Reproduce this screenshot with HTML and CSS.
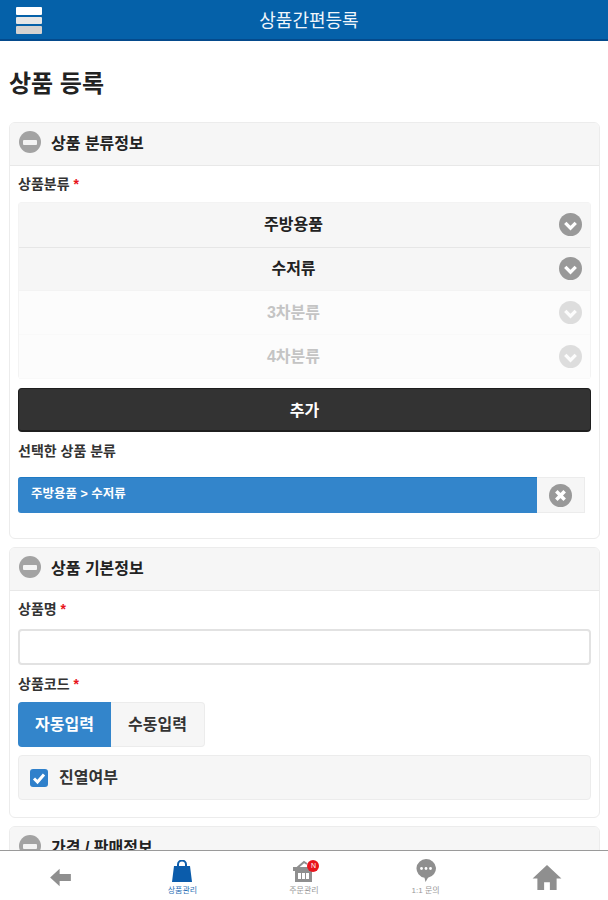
FILE: index.html
```html
<!DOCTYPE html>
<html lang="ko">
<head>
    <meta charset="UTF-8">
    <meta name="viewport" content="width=device-width, initial-scale=1.0">
    <title>상품간편등록</title>
    <link rel="stylesheet" href="styles.css">
</head>
<body>
    <header class="topbar">
        <div class="menu-btn"><span></span><span></span><span></span></div>
        <div class="topbar-title">상품간편등록</div>
    </header>

    <main class="content">
        <h1>상품 등록</h1>

        <section class="panel">
            <div class="panel-head">
                <span class="round-icon"><span class="minus"></span></span>
                <span>상품 분류정보</span>
            </div>
            <div class="panel-body">
                <div class="label">상품분류 <b>*</b></div>
                <div class="select-group">
                    <div class="select select-first">
                        <span>주방용품</span>
                        <svg class="chev" viewBox="0 0 22 22"><circle cx="11" cy="11" r="11" fill="#999"/><path d="M6 9.5l5 5 5-5" fill="none" stroke="#fff" stroke-width="3.2"/></svg>
                    </div>
                    <div class="select select-second">
                        <span>수저류</span>
                        <svg class="chev" viewBox="0 0 22 22"><circle cx="11" cy="11" r="11" fill="#999"/><path d="M6 9.5l5 5 5-5" fill="none" stroke="#fff" stroke-width="3.2"/></svg>
                    </div>
                    <div class="select disabled">
                        <span>3차분류</span>
                        <svg class="chev" viewBox="0 0 22 22"><circle cx="11" cy="11" r="11" fill="#999"/><path d="M6 9.5l5 5 5-5" fill="none" stroke="#fff" stroke-width="3.2"/></svg>
                    </div>
                    <div class="select disabled">
                        <span>4차분류</span>
                        <svg class="chev" viewBox="0 0 22 22"><circle cx="11" cy="11" r="11" fill="#999"/><path d="M6 9.5l5 5 5-5" fill="none" stroke="#fff" stroke-width="3.2"/></svg>
                    </div>
                </div>
                <div class="add-btn">추가</div>
                <div class="label selected-label">선택한 상품 분류</div>
                <div class="selected-row">
                    <div class="selected-text">주방용품 &gt; 수저류</div>
                    <div class="selected-del">
                        <svg viewBox="0 0 22 22" width="23" height="23"><circle cx="11" cy="11" r="11" fill="#999"/><path d="M7 7l8 8M15 7l-8 8" fill="none" stroke="#fff" stroke-width="3.4"/></svg>
                    </div>
                </div>
            </div>
        </section>

        <section class="panel">
            <div class="panel-head">
                <span class="round-icon"><span class="minus"></span></span>
                <span>상품 기본정보</span>
            </div>
            <div class="panel-body basic-body">
                <div class="label">상품명 <b>*</b></div>
                <input class="text-input" type="text">
                <div class="label code-label">상품코드 <b>*</b></div>
                <div class="toggle">
                    <div class="toggle-item active">자동입력</div>
                    <div class="toggle-item">수동입력</div>
                </div>
                <div class="check-row">
                    <span class="check-box">
                        <svg viewBox="0 0 18 18" width="18" height="18"><path d="M4 9.5l3.5 3.5L14 5.5" fill="none" stroke="#fff" stroke-width="3"/></svg>
                    </span>
                    <span class="check-label">진열여부</span>
                </div>
            </div>
        </section>

        <section class="panel">
            <div class="panel-head">
                <span class="round-icon"><span class="minus"></span></span>
                <span>가격 / 판매정보</span>
            </div>
        </section>
    </main>

    <nav class="tabbar">
        <div class="tab">
            <svg width="21" height="19" viewBox="0 0 24 22"><path d="M0 11L11 1v6h13v8H11v6z" fill="#8f8f8f"/></svg>
        </div>
        <div class="tab active">
            <svg width="22" height="22" viewBox="0 0 22 22"><path d="M7 8V4.5a4 4 0 0 1 8 0V8" fill="none" stroke="#0b5cab" stroke-width="2"/><path d="M3 6h16l2 16H1z" fill="#0b5cab"/></svg>
            <span>상품관리</span>
        </div>
        <div class="tab">
            <span class="tab-icon">
                <svg width="21" height="22" viewBox="0 0 21 22"><path d="M4 8l7-6 3 2" fill="none" stroke="#8f8f8f" stroke-width="2"/><path d="M0 7h21v4H0z" fill="#8f8f8f"/><path d="M2 11h17v11H2z" fill="#8f8f8f"/><path d="M5 13h3v6H5zM9 13h3v6H9zM13 13h3v6h-3z" fill="#fff"/></svg>
                <i class="badge">N</i>
            </span>
            <span>주문관리</span>
        </div>
        <div class="tab">
            <svg width="20" height="23" viewBox="0 0 20 23"><path d="M10 0a10 9.5 0 0 1 2 18.8L9.5 23l-1-4.2A10 9.5 0 0 1 10 0z" fill="#8f8f8f"/><circle cx="5.5" cy="9.5" r="1.4" fill="#fff"/><circle cx="10" cy="9.5" r="1.4" fill="#fff"/><circle cx="14.5" cy="9.5" r="1.4" fill="#fff"/></svg>
            <span>1:1 문의</span>
        </div>
        <div class="tab">
            <svg width="30" height="25" viewBox="0 0 30 26"><path d="M15 0L0 14h5v12h7v-8h6v8h7V14h5z" fill="#8f8f8f"/></svg>
        </div>
    </nav>
</body>
</html>
```

FILE: styles.css
```css
html, body {
    height: 100%;
}

body {
    font-family: "Liberation Sans", "Noto Sans CJK KR", sans-serif;
    background-color: #fff;
    color: #222;
    margin: 0;
    padding: 0;
    height: 900px;
    overflow: hidden;
    position: relative;
}

.topbar {
    height: 39px;
    background-color: #0561a9;
    border-bottom: 2px solid #044a8c;
    display: flex;
    align-items: center;
    justify-content: center;
    position: relative;
}

.topbar-title {
    color: #f1f6fb;
    font-size: 18px;
    line-height: 39px;
    padding: 4px 0 0 10px;
}

.menu-btn {
    position: absolute;
    left: 16px;
    top: 7px;
    width: 26px;
    display: flex;
    flex-direction: column;
    gap: 2px;
}

.menu-btn span {
    height: 7.5px;
    background: #e6e6e6;
    border-radius: 1px;
}

.menu-btn span:first-child {
    background: #fff;
}

.menu-btn span:last-child {
    background: #d5d2d0;
}

.content {
    padding: 0 8px 0 9px;
}

h1 {
    margin: 0;
    padding: 28px 0 23px 0;
    font-size: 24px;
    line-height: 30px;
    font-weight: bold;
    color: #222;
}

.panel {
    border: 1px solid #ececec;
    border-radius: 6px;
    margin-bottom: 8px;
    background: #fff;
    overflow: hidden;
}

.panel-head {
    height: 38px;
    padding-bottom: 4px;
    background: #f6f6f6;
    border-bottom: 1px solid #e8e8e8;
    display: flex;
    align-items: center;
    padding-left: 9px;
    gap: 10px;
    font-size: 16px;
    font-weight: bold;
    color: #222;
}

.round-icon {
    width: 22px;
    height: 22px;
    border-radius: 50%;
    background: #a3a3a3;
    display: flex;
    align-items: center;
    justify-content: center;
}

.minus {
    width: 14px;
    height: 5px;
    background: #f4f4f4;
    border-radius: 1px;
}

.panel-body {
    padding: 10px 8px 25px 8px;
}

.basic-body {
    padding-bottom: 17px;
}

.label {
    font-size: 14px;
    line-height: 16px;
    font-weight: bold;
    color: #333;
}

.label b {
    color: #e8141c;
}

.select-group {
    margin-top: 10px;
    border: 1px solid #f3f3f3;
    border-bottom: 0;
    border-radius: 4px;
}

.select {
    height: 44px;
    padding-bottom: 3px;
    background: #f6f6f6;
    border-bottom: 1px solid #e6e6e6;
    box-sizing: border-box;
    display: flex;
    align-items: center;
    justify-content: center;
    position: relative;
    font-size: 16px;
    font-weight: bold;
    color: #222;
    padding-right: 22px;
}

.select-first {
    height: 45px;
    padding-bottom: 4px;
}

.select-second {
    height: 43px;
    padding-bottom: 4px;
    border-bottom-color: #f3f3f3;
}

.select-second .chev {
    top: 9px;
}

.select.disabled {
    background: #fcfcfc;
    border-bottom-color: #f9f9f9;
    color: #c4c4c4;
}

.chev {
    position: absolute;
    right: 8px;
    top: 10px;
    width: 23px;
    height: 23px;
}

.select.disabled .chev {
    opacity: 0.3;
}

.add-btn {
    margin-top: 9px;
    height: 44px;
    line-height: 43px;
    box-sizing: border-box;
    background: #333;
    border: 1px solid #1f1f1f;
    border-bottom-width: 2px;
    border-radius: 4px;
    color: #fff;
    text-align: center;
    font-size: 16px;
    font-weight: bold;
}

.selected-label {
    margin-top: 11px;
}

.selected-row {
    margin-top: 18px;
    display: flex;
    height: 36px;
    width: 567px;
}

.selected-text {
    flex: 1;
    background: #3385cb;
    border-top: 1px solid #1f7ac4;
    border-radius: 3px 0 0 3px;
    color: #fff;
    font-size: 12.5px;
    font-weight: bold;
    line-height: 33px;
    padding-left: 13px;
}

.selected-del {
    width: 48px;
    background: #f6f6f6;
    border: 1px solid #ececec;
    border-left: 0;
    box-sizing: border-box;
    display: flex;
    align-items: center;
    justify-content: center;
}

.text-input {
    display: block;
    box-sizing: border-box;
    width: 100%;
    height: 36px;
    margin-top: 12px;
    border: 2px solid #e2e2e2;
    border-radius: 4px;
    background: #fff;
    outline: none;
}

.code-label {
    margin-top: 11px;
}

.toggle {
    margin-top: 10px;
    display: flex;
    width: 188px;
    height: 45px;
}

.toggle-item {
    width: 94px;
    padding-bottom: 3px;
    box-sizing: border-box;
    display: flex;
    align-items: center;
    justify-content: center;
    font-size: 16px;
    font-weight: bold;
    color: #333;
    background: #f6f6f6;
    border: 1px solid #ececec;
    border-left: 0;
    border-radius: 0 4px 4px 0;
}

.toggle-item.active {
    width: 93px;
    background: #3385cb;
    border: 0;
    border-radius: 4px 0 0 4px;
    color: #fff;
}

.check-row {
    margin-top: 8px;
    height: 45px;
    box-sizing: border-box;
    background: #f6f6f6;
    border: 1px solid #ececec;
    border-radius: 4px;
    display: flex;
    align-items: center;
    padding-left: 11px;
    gap: 11px;
    font-size: 16px;
    font-weight: bold;
    color: #333;
}

.check-label {
    padding-bottom: 3px;
}

.check-box {
    width: 18px;
    height: 18px;
    background: #2f80cb;
    border-radius: 3px;
    display: flex;
}

.tabbar {
    position: absolute;
    left: 0;
    right: 0;
    bottom: 0;
    height: 49px;
    background: #fff;
    border-top: 1px solid #9a9a9a;
    display: flex;
}

.tab {
    flex: 1;
    display: flex;
    flex-direction: column;
    align-items: center;
    justify-content: center;
    font-size: 8px;
    color: #999;
    gap: 2px;
    padding-top: 3px;
}

.tab.active {
    color: #2a6fb5;
}

.tab-icon {
    position: relative;
    display: flex;
}

.badge {
    position: absolute;
    top: 0;
    right: -5px;
    width: 12px;
    height: 12px;
    border-radius: 50%;
    background: #e8141c;
    color: #fff;
    font-size: 7px;
    line-height: 12px;
    text-align: center;
    font-style: normal;
}
```
